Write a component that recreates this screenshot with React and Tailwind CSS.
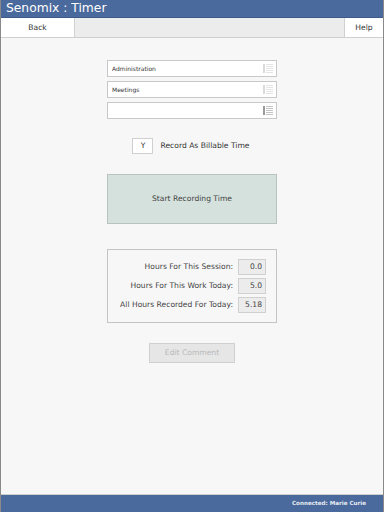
import React, { useState } from 'react';

const font = { fontFamily: '"DejaVu Sans", Verdana, sans-serif' };

const ListIcon = ({ dark }) => (
  <svg width="10" height="9" viewBox="0 0 10 9" className="shrink-0">
    <rect x="0" y="0" width="2" height="9" fill={dark ? '#9a9a9a' : '#dadada'} />
    {[0.5, 2.5, 4.5, 6.5, 8.5].map((y) => (
      <rect key={y} x="3" y={y - 0.5} width="7" height="1" fill={dark ? '#c4c4c4' : '#e4e4e4'} />
    ))}
  </svg>
);

const PickField = ({ value, dark }) => (
  <div className="flex items-center justify-between h-[17px] bg-white border border-[#c8c8c8] pl-[4px] pr-[3px]">
    <span className="text-[6px] text-[#333]">{value}</span>
    <ListIcon dark={dark} />
  </div>
);

const StatRow = ({ label, value }) => (
  <div className="flex items-center justify-end gap-[5px]">
    <span className="text-[7.6px] text-[#444]">{label}</span>
    <div className="w-[28px] h-[16px] bg-[#ececec] border border-[#d0d0d0] flex items-center justify-end pr-[3px] text-[7.6px] text-[#444]">
      {value}
    </div>
  </div>
);

export default function App() {
  const [billable, setBillable] = useState('Y');

  return (
    <div className="w-[384px] h-[512px] flex flex-col bg-[#f7f7f7] border-x border-[#8a8a8a]" style={font}>
      <div className="h-[18px] bg-[#4a699c] border-b border-[#3d5a8a] flex items-center pl-[5px]">
        <span className="text-[12.3px] text-white leading-none">Senomix : Timer</span>
      </div>
      <div className="h-[20px] flex bg-[#ececec] border-b border-[#cfcfcf]">
        <button className="w-[74px] bg-white border-r border-[#d0d0d0] text-[7.6px] text-[#333]">Back</button>
        <div className="flex-1" />
        <button className="w-[39px] bg-white border-l border-[#d0d0d0] text-[7.6px] text-[#333]">Help</button>
      </div>

      <div className="flex-1 flex flex-col items-center pt-[22px]">
        <div className="w-[170px] flex flex-col gap-[4px]">
          <PickField value="Administration" />
          <PickField value="Meetings" />
          <PickField value="" dark />
        </div>

        <div className="flex items-center gap-[7px] mt-[19px] ml-[-2px]">
          <button
            onClick={() => setBillable(billable === 'Y' ? 'N' : 'Y')}
            className="w-[21px] h-[16px] bg-white border border-[#d0d0d0] text-[7.6px] text-[#333]"
          >
            {billable}
          </button>
          <span className="text-[7.6px] text-[#333]">Record As Billable Time</span>
        </div>

        <button className="w-[170px] h-[50px] mt-[20px] bg-[#d5e1dc] border border-[#b9c2bf] text-[7.6px] text-[#444]">
          Start Recording Time
        </button>

        <div className="w-[170px] h-[74px] mt-[25px] border border-[#c4c4c4] flex flex-col justify-center gap-[3px] pr-[10px]">
          <StatRow label="Hours For This Session:" value="0.0" />
          <StatRow label="Hours For This Work Today:" value="5.0" />
          <StatRow label="All Hours Recorded For Today:" value="5.18" />
        </div>

        <button disabled className="w-[86px] h-[20px] mt-[20px] bg-[#e6e6e6] border border-[#d0d0d0] text-[7.6px] text-[#b8b8b8]">
          Edit Comment
        </button>
      </div>

      <div className="h-[18px] bg-[#4a699c] border-t border-[#cfcfcf] flex items-center justify-end pr-[17px]">
        <span className="text-[5.6px] font-bold text-[#e8ecf4]">Connected: Marie Curie</span>
      </div>
    </div>
  );
}
